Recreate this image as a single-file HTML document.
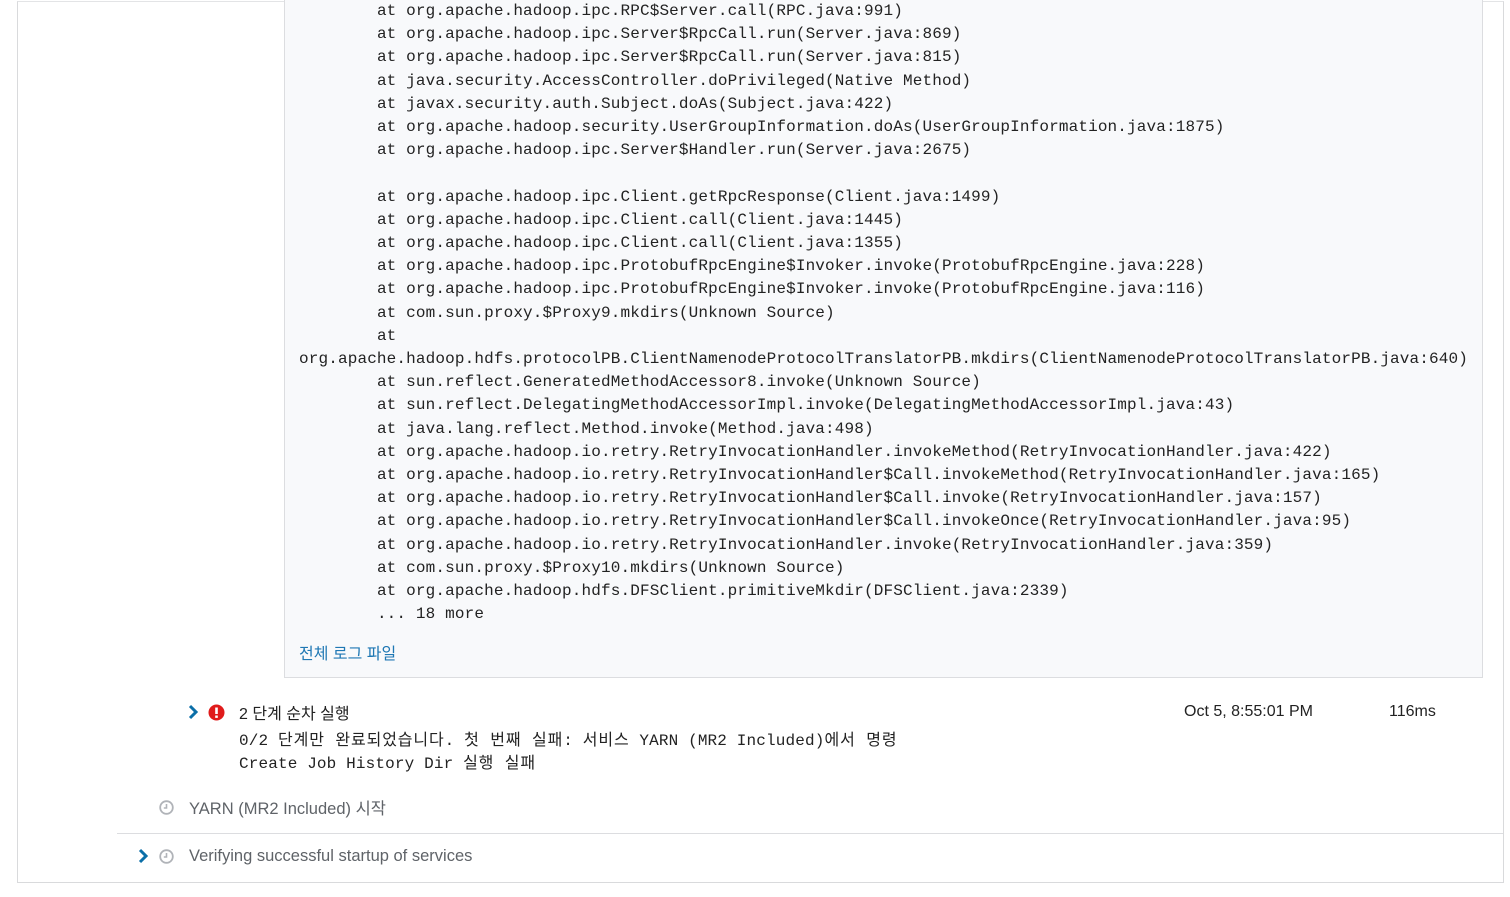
<!DOCTYPE html>
<html><head><meta charset="utf-8"><style>
body{margin:0;width:1510px;height:897px;background:#fff;position:relative;overflow:hidden;font-family:"Liberation Sans","Noto Sans CJK KR",sans-serif}
.outer{position:absolute;left:17px;top:1px;width:1485px;height:880px;border:1px solid #d9dadc;border-top:1px solid #e3e4e6}
.panel{position:absolute;left:284px;top:-10px;width:1197px;height:687px;background:#f8f9fb;border:1px solid #dcdde0;border-top:none}
pre{position:absolute;left:299px;top:0px;margin:0;font-family:"Liberation Mono","Noto Sans CJK KR",monospace;font-size:16px;letter-spacing:0.14px;line-height:23.2px;color:#222;tab-size:8}
.link{position:absolute;left:299px;top:640px;font-size:16px;color:#1f78b4}
.t{position:absolute;font-size:16px;color:#222;white-space:nowrap}
.g{color:#5f6368}
.msg{position:absolute;left:239px;top:729.5px;margin:0;font-family:"Liberation Mono","Noto Sans CJK KR",monospace;font-size:16px;letter-spacing:0.14px;line-height:23.2px;color:#222}
.k{letter-spacing:0.9px}
.sep{position:absolute;left:117px;top:833px;width:1386px;height:1px;background:#dcdde0}
svg{position:absolute}
</style></head><body>
<div class="outer"></div>
<div class="panel"></div>
<pre>	at org.apache.hadoop.ipc.RPC$Server.call(RPC.java:991)
	at org.apache.hadoop.ipc.Server$RpcCall.run(Server.java:869)
	at org.apache.hadoop.ipc.Server$RpcCall.run(Server.java:815)
	at java.security.AccessController.doPrivileged(Native Method)
	at javax.security.auth.Subject.doAs(Subject.java:422)
	at org.apache.hadoop.security.UserGroupInformation.doAs(UserGroupInformation.java:1875)
	at org.apache.hadoop.ipc.Server$Handler.run(Server.java:2675)

	at org.apache.hadoop.ipc.Client.getRpcResponse(Client.java:1499)
	at org.apache.hadoop.ipc.Client.call(Client.java:1445)
	at org.apache.hadoop.ipc.Client.call(Client.java:1355)
	at org.apache.hadoop.ipc.ProtobufRpcEngine$Invoker.invoke(ProtobufRpcEngine.java:228)
	at org.apache.hadoop.ipc.ProtobufRpcEngine$Invoker.invoke(ProtobufRpcEngine.java:116)
	at com.sun.proxy.$Proxy9.mkdirs(Unknown Source)
	at
org.apache.hadoop.hdfs.protocolPB.ClientNamenodeProtocolTranslatorPB.mkdirs(ClientNamenodeProtocolTranslatorPB.java:640)
	at sun.reflect.GeneratedMethodAccessor8.invoke(Unknown Source)
	at sun.reflect.DelegatingMethodAccessorImpl.invoke(DelegatingMethodAccessorImpl.java:43)
	at java.lang.reflect.Method.invoke(Method.java:498)
	at org.apache.hadoop.io.retry.RetryInvocationHandler.invokeMethod(RetryInvocationHandler.java:422)
	at org.apache.hadoop.io.retry.RetryInvocationHandler$Call.invokeMethod(RetryInvocationHandler.java:165)
	at org.apache.hadoop.io.retry.RetryInvocationHandler$Call.invoke(RetryInvocationHandler.java:157)
	at org.apache.hadoop.io.retry.RetryInvocationHandler$Call.invokeOnce(RetryInvocationHandler.java:95)
	at org.apache.hadoop.io.retry.RetryInvocationHandler.invoke(RetryInvocationHandler.java:359)
	at com.sun.proxy.$Proxy10.mkdirs(Unknown Source)
	at org.apache.hadoop.hdfs.DFSClient.primitiveMkdir(DFSClient.java:2339)
	... 18 more</pre>
<div class="link">전체 로그 파일</div>

<svg style="left:187px;top:704px" width="12" height="16" viewBox="0 0 12 16"><path d="M3 2 L9 8 L3 14" fill="none" stroke="#0b6fa8" stroke-width="3"/></svg>
<svg style="left:208px;top:704px" width="17" height="17" viewBox="0 0 17 17"><circle cx="8.5" cy="8.5" r="8" fill="#e01b1b"/><rect x="7.2" y="3.5" width="2.6" height="6.5" fill="#fff"/><rect x="7.2" y="11.5" width="2.6" height="2.4" fill="#fff"/></svg>
<div class="t" style="left:239px;top:700px">2 단계 순차 실행</div>
<div class="t" style="left:1184px;top:703px">Oct 5, 8:55:01 PM</div>
<div class="t" style="left:1389px;top:703px">116ms</div>
<pre class="msg">0/2 <span class="k">단계만 완료되었습니다</span>. <span class="k">첫 번째 실패</span>: <span class="k">서비스</span> YARN (MR2 Included)<span class="k">에서 명령</span>
Create Job History Dir <span class="k">실행 실패</span></pre>

<svg style="left:159px;top:800px" width="15" height="15" viewBox="0 0 15 15"><circle cx="7.5" cy="7.5" r="6.3" fill="none" stroke="#b0b3b8" stroke-width="1.8"/><path d="M7.5 4 V8 H4.8" fill="none" stroke="#b0b3b8" stroke-width="1.6"/></svg>
<div class="t g" style="left:189px;top:795px;font-size:16.5px">YARN (MR2 Included) 시작</div>
<div class="sep"></div>
<svg style="left:137px;top:848px" width="12" height="16" viewBox="0 0 12 16"><path d="M3 2 L9 8 L3 14" fill="none" stroke="#0b6fa8" stroke-width="3"/></svg>
<svg style="left:159px;top:849px" width="15" height="15" viewBox="0 0 15 15"><circle cx="7.5" cy="7.5" r="6.3" fill="none" stroke="#b0b3b8" stroke-width="1.8"/><path d="M7.5 4 V8 H4.8" fill="none" stroke="#b0b3b8" stroke-width="1.6"/></svg>
<div class="t g" style="left:189px;top:847px;font-size:16.5px">Verifying successful startup of services</div>
</body></html>
